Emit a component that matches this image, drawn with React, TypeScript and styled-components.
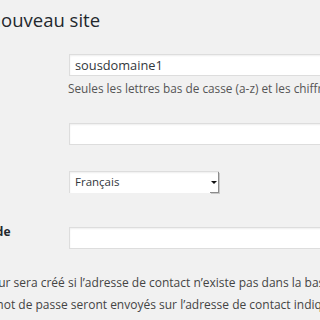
import React from "react";
import styled, { createGlobalStyle } from "styled-components";

const GlobalStyle = createGlobalStyle`
  html, body {
    margin: 0;
    padding: 0;
    background: #f1f1f1;
  }
  body {
    font-family: "Open Sans", "DejaVu Sans", sans-serif;
    color: #444;
  }
`;

const Page = styled.div`
  width: 320px;
  height: 320px;
  overflow: hidden;
  background: #f1f1f1;
`;

const Wrap = styled.div`
  margin-left: -141px;
  width: 600px;
`;

const Title = styled.h1<{ $offset: number }>`
  margin: 0 0 0 ${({ $offset }) => $offset}px;
  padding-top: 8px;
  font-size: 18.5px;
  font-weight: 400;
  line-height: 23px;
  color: #23282d;
  white-space: nowrap;
`;

const Row = styled.div<{ $top: number }>`
  display: flex;
  align-items: flex-start;
  margin-top: ${({ $top }) => $top}px;
`;

const Th = styled.div<{ $indent?: number }>`
  box-sizing: border-box;
  width: 200px;
  flex-shrink: 0;
  padding-right: 10px;
  padding-left: ${({ $indent }) => $indent ?? 0}px;
  font-size: 12px;
  line-height: 18px;
  font-weight: 700;
  color: #23282d;
`;

const Td = styled.div`
  padding-left: 10px;
  flex: 1;
`;

const Input = styled.div<{ $gap?: number }>`
  box-sizing: border-box;
  width: 330px;
  height: 22px;
  margin-top: ${({ $gap }) => $gap ?? 0}px;
  padding: 0 5px;
  background: #fff;
  border: 1px solid #ddd;
  box-shadow: inset 0 1px 2px rgba(0, 0, 0, 0.07);
  font-size: 12.8px;
  line-height: 20px;
  color: #32373c;
  white-space: nowrap;
`;

const Description = styled.p`
  margin: 3px 0 0 -1px;
  font-size: 11.8px;
  line-height: 18px;
  color: #555;
  white-space: nowrap;
`;

const Select = styled.div`
  box-sizing: border-box;
  display: flex;
  width: 150px;
  height: 22px;
  background: #fff;
  border: 1px solid #ddd;
  border-right: none;
  border-bottom: none;
  box-shadow: inset 0 1px 2px rgba(0, 0, 0, 0.07);
`;

const SelectText = styled.span`
  flex: 1;
  padding-left: 5px;
  font-size: 11.5px;
  line-height: 20px;
  color: #32373c;
`;

const ArrowBox = styled.span`
  box-sizing: border-box;
  width: 9px;
  display: flex;
  align-items: center;
  justify-content: center;
  border-right: 1px solid #8c8c8c;
  border-bottom: 1px solid #8c8c8c;
  box-shadow: 1px 1px 0 #c8c8c8;

  &::after {
    content: "";
    width: 0;
    height: 0;
    border-left: 3px solid transparent;
    border-right: 3px solid transparent;
    border-top: 3px solid #111;
  }
`;

const Note = styled.div`
  margin-top: 13px;
  font-size: 12px;
  line-height: 22px;
  color: #444;
  white-space: nowrap;
`;

const NoteLine = styled.div<{ $offset: number }>`
  margin-left: ${({ $offset }) => $offset}px;
`;

const App = () => {
  return (
    <Page>
      <GlobalStyle />
      <Wrap>
        <Title $offset={35}>Ajouter un nouveau site</Title>

        <Row $top={23}>
          <Th>Adresse du site (URL)</Th>
          <Td>
            <Input>sousdomaine1</Input>
            <Description>
              Seules les lettres bas de casse (a-z) et les chiffres sont
              autorisés.
            </Description>
          </Td>
        </Row>

        <Row $top={26}>
          <Th>Titre du site</Th>
          <Td>
            <Input />
          </Td>
        </Row>

        <Row $top={26}>
          <Th>Langue du site</Th>
          <Td>
            <Select>
              <SelectText>Français</SelectText>
              <ArrowBox />
            </Select>
          </Td>
        </Row>

        <Row $top={30}>
          <Th $indent={20}>Adresse de contact de l’administrateur</Th>
          <Td>
            <Input $gap={4} />
          </Td>
        </Row>

        <Note>
          <NoteLine $offset={35}>
            Un nouvel utilisateur sera créé si l’adresse de contact n’existe
            pas dans la base de données.
          </NoteLine>
          <NoteLine $offset={38}>
            L’identifiant et le mot de passe seront envoyés sur l’adresse de
            contact indiquée.
          </NoteLine>
        </Note>
      </Wrap>
    </Page>
  );
};

export default App;
